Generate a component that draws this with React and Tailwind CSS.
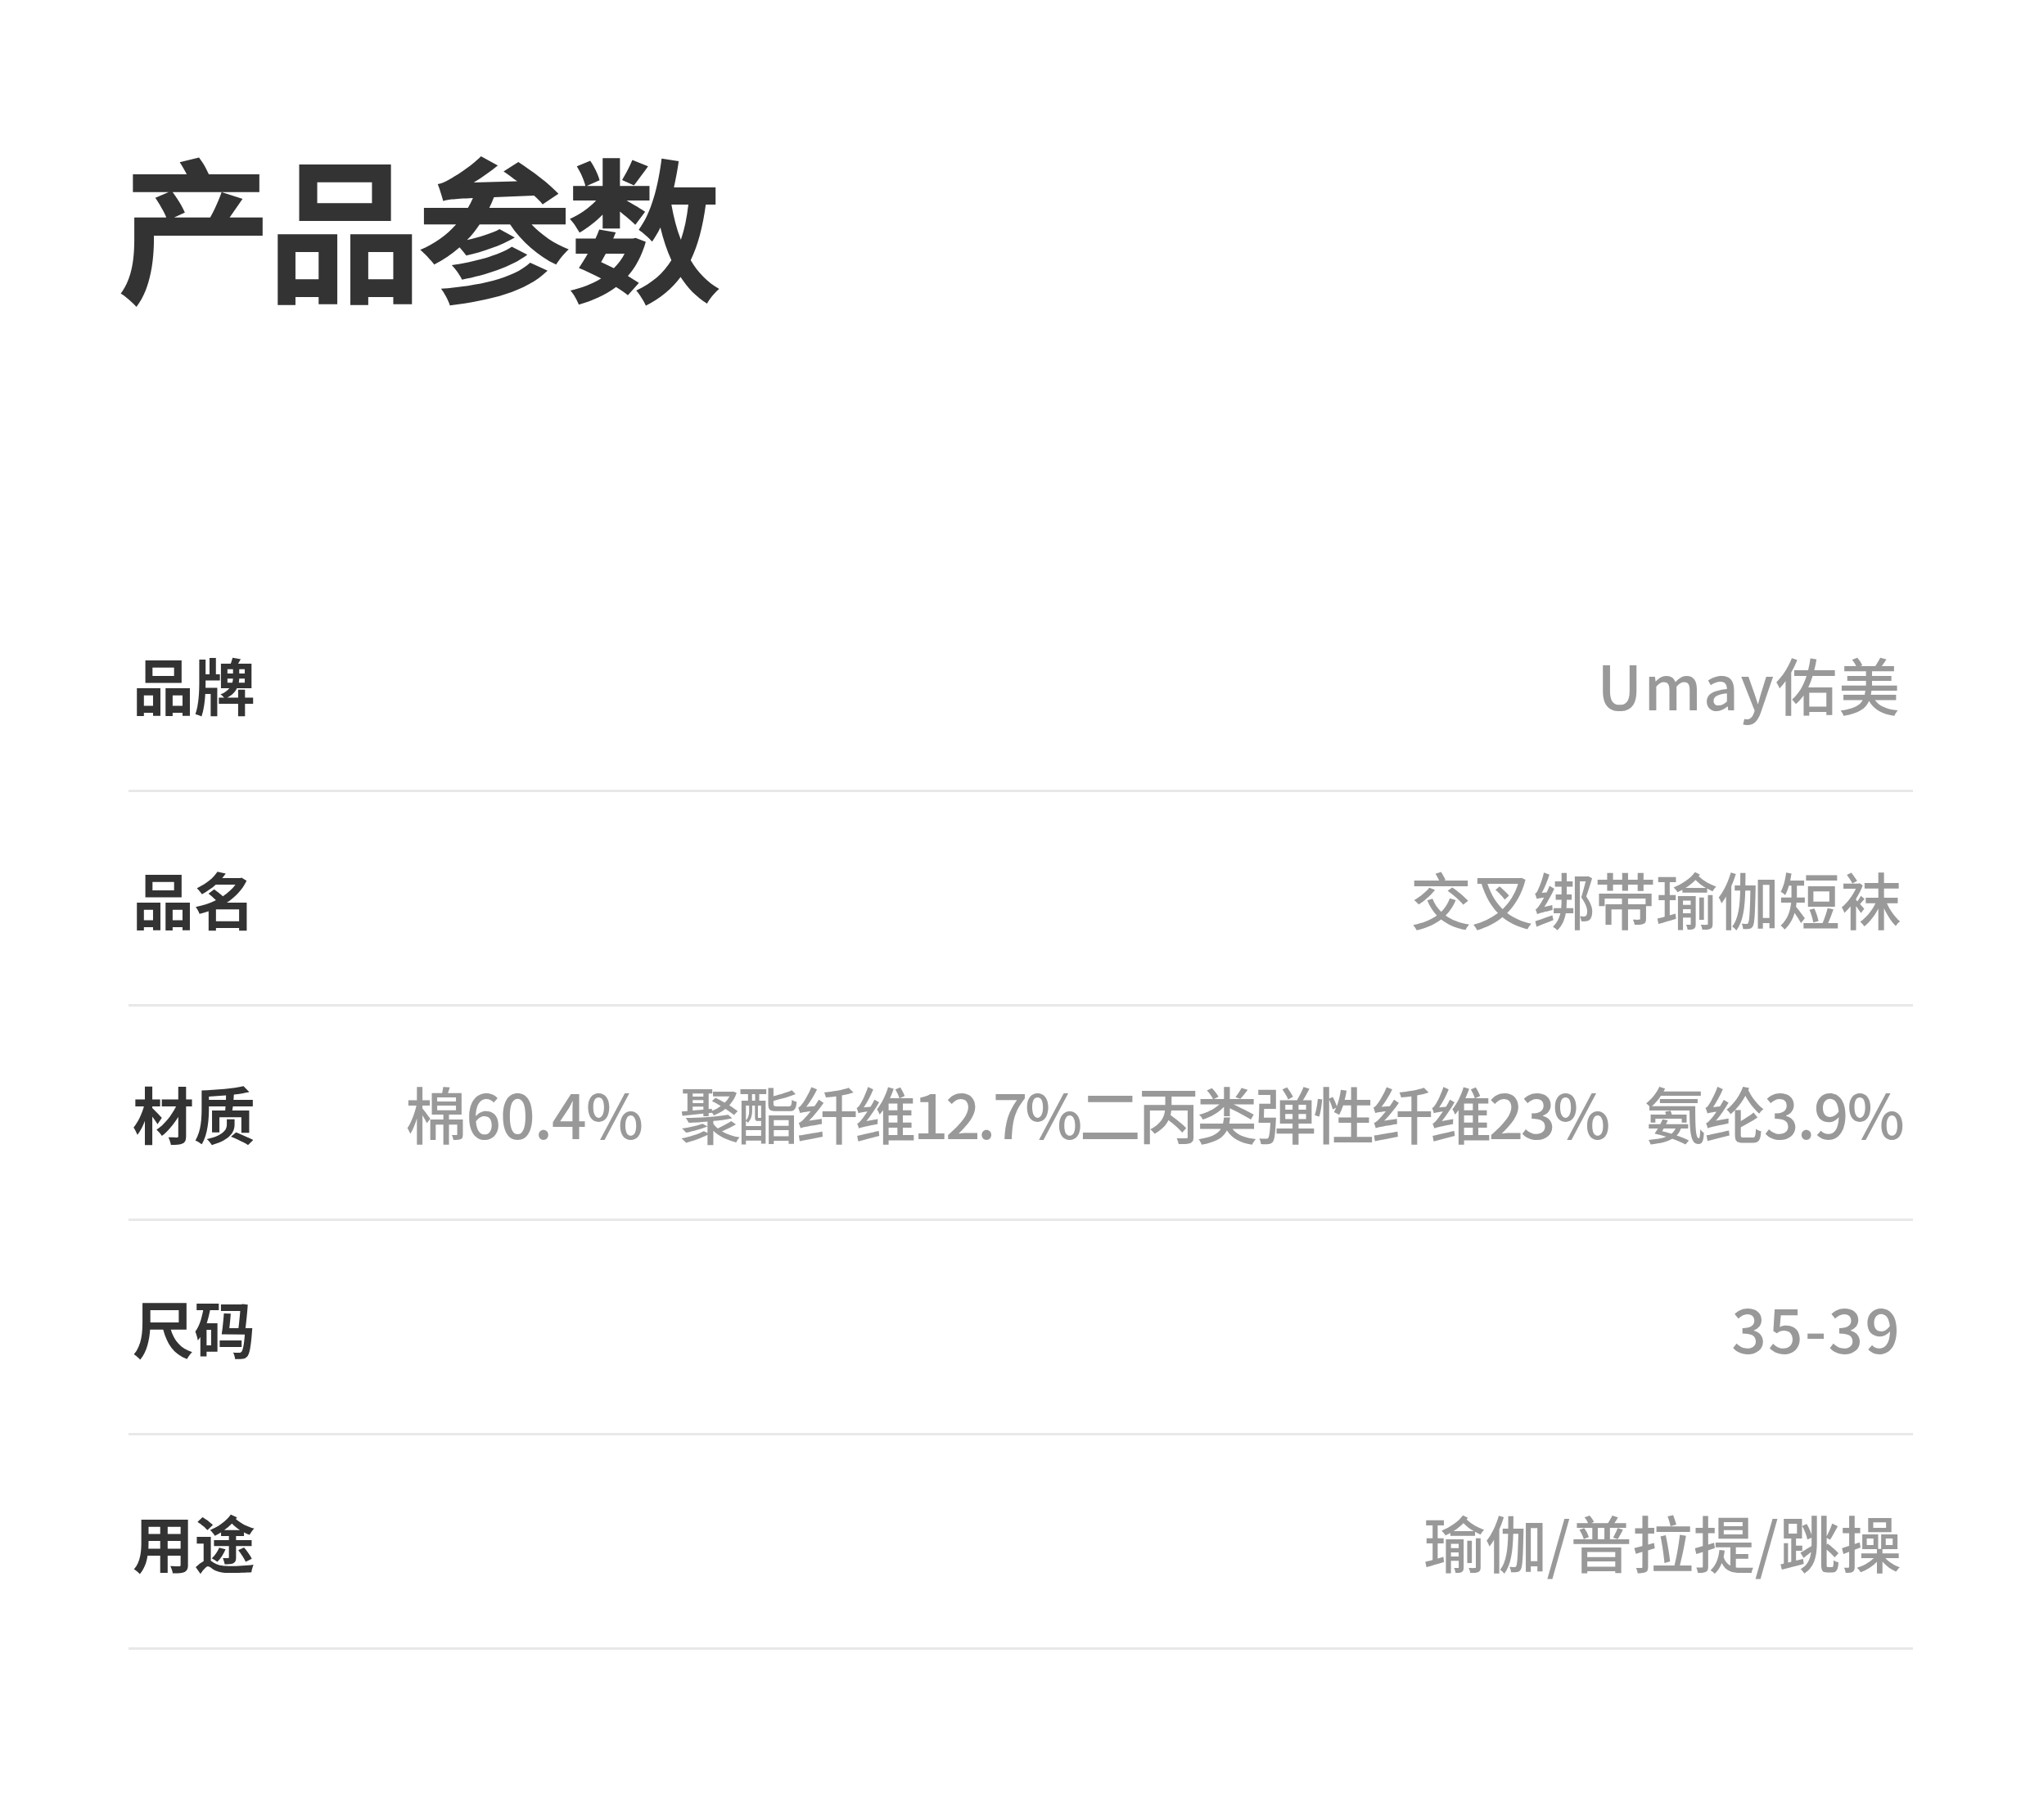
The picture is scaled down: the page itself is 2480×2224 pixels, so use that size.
const ROWS = [
  { label: '品牌', value: 'Umay佑美', wide: true },
  { label: '品名', value: '交叉绑带瑜伽短袜' },
  { label: '材质', parts: ['棉60.4%', '聚酯纤维12.7%二丙类弹性纤维23%', '氨纶3.9%'] },
  { label: '尺码', value: '35-39', wide: true },
  { label: '用途', value: '瑜伽/普拉提/跳操' },
]

const FONT = "font-['Noto_Sans_CJK_SC','Noto_Sans',sans-serif]"

export default function App() {
  return (
    <div className={`w-[2480px] h-[2224px] bg-white pl-[157px] pr-[143px] ${FONT}`}>
      {/* title */}
      <div className="h-[706px] pt-[178px]">
        <h1 className="-ml-[14px] text-[190px] leading-none font-bold text-[#333333] tracking-[-7px]">
          产品参数
        </h1>
      </div>

      {/* spec rows */}
      <div className="flex flex-col">
        {ROWS.map(row => (
          <div key={row.label} className="h-[262px] flex items-center justify-between border-b-[3px] border-[#e8e8e8]">
            <span className="pl-[5px] text-[75px] leading-none font-bold text-[#333333]">{row.label}</span>
            {row.parts ? (
              <span className="pr-[12px] flex items-center gap-[45px] text-[75px] leading-none font-medium text-[#999999]">
                <span className="tracking-[-1px]">{row.parts[0]}</span>
                <span className="tracking-[-3.6px]">{row.parts[1]}</span>
                <span className="tracking-[-2px]">{row.parts[2]}</span>
              </span>
            ) : (
              <span className={`pr-[14px] text-[75px] leading-none font-medium text-[#999999] ${row.wide ? 'tracking-[2px]' : ''}`}>
                {row.value}
              </span>
            )}
          </div>
        ))}
      </div>
    </div>
  )
}
